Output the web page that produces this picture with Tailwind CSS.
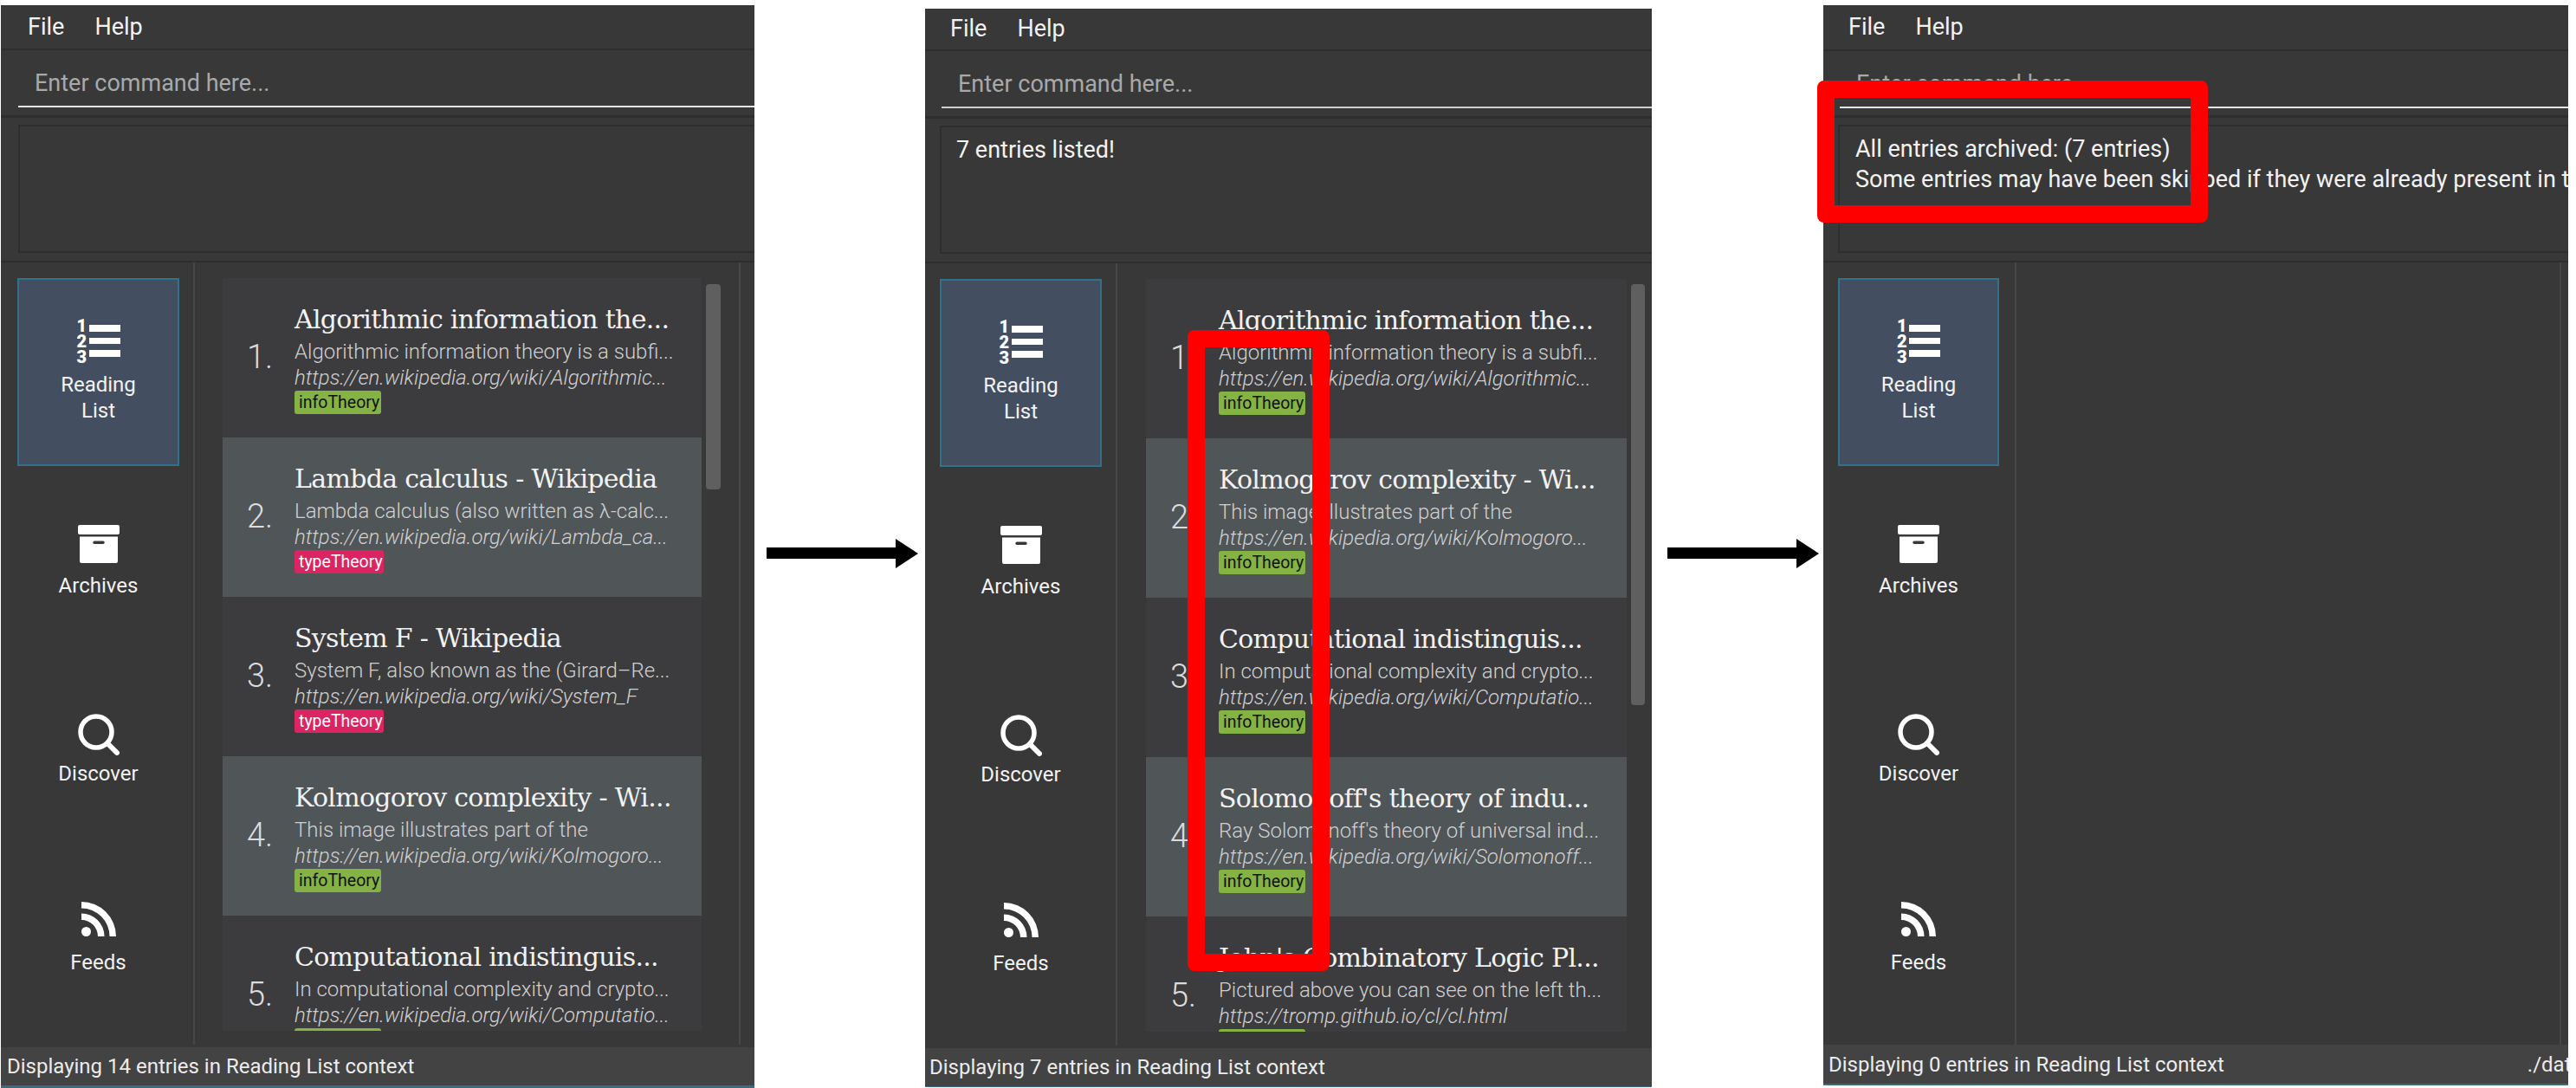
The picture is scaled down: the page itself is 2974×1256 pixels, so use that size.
<!DOCTYPE html>
<html>
<head>
<meta charset="utf-8">
<title>Reading list</title>
<script src="https://cdn.jsdelivr.net/npm/@tailwindcss/browser@4"></script>
</head>
<body class="bg-white">
<div class="relative flex items-start w-[2974px] h-[1256px] overflow-hidden bg-white font-['Roboto',sans-serif] text-[#f2f2f2]">

  <!-- Panel 1 -->
  <div class="ml-[1px] mt-[6px] w-[870px] h-[1250px] shrink-0 flex flex-col bg-[#383838] overflow-hidden">
    <div class="h-[50px] shrink-0 flex items-center gap-[35px] pl-[31px] text-[27px] border-b-2 border-[#2e2e2e] box-content"><span>File</span><span>Help</span></div>
    <div class="h-[75px] shrink-0 pl-[20px] border-b-[3px] border-[#2e2e2e] box-content">
      <div class="h-[66px] pl-[19px] pt-[18px] leading-[40px] text-[27px] text-[#a9a9a9] border-b-2 border-[#e4e4e4]">Enter command here...</div>
    </div>
    <div class="h-[157px] shrink-0 pt-[8px] pl-[20px] border-b-2 border-[#2e2e2e] box-content">
      <div class="h-[148px] border-2 border-r-0 border-[#2e2e2e]"></div>
    </div>
    <div class="h-[903px] shrink-0 flex pt-[18px]">
      <div class="w-[224px] shrink-0 -mt-[18px] pt-[18px] pl-[19px] pr-[16px] border-r-2 border-[#474747]">
        <div class="h-[217px] pb-[2px] flex flex-col items-center justify-center bg-[#434f60] border-2 border-[#33708a]">
          <div class="flex gap-[3px] h-[51px]"><div class="w-[11px] -mt-[1px] text-[20px] leading-[18px] font-black text-white">1<br>2<br>3</div><div class="w-[36px] pt-[7px] flex flex-col gap-[7px]"><div class="h-[7.500px] bg-white"></div><div class="h-[7.500px] bg-white"></div><div class="h-[7.500px] bg-white"></div></div></div>
          <div class="mt-[10px] text-[24px] leading-[30px] text-center">Reading<br>List</div>
        </div>
        <div class="h-[217px] pt-[3px] flex flex-col items-center justify-center">
          <svg class="w-[48px] h-[44px]" viewBox="0 0 48 44" fill="#fff"><rect x="0" y="0" width="48" height="11" rx="2"/><path d="M2 13.500h44v28.500a2 2 0 0 1-2 2h-40a2 2 0 0 1-2-2zM19 18.500a1.500 1.500 0 0 0 0 3.500h10a1.500 1.500 0 0 0 0-3.500z" fill-rule="evenodd"/></svg>
          <div class="mt-[11px] text-[24px] leading-[30px]">Archives</div>
        </div>
        <div class="h-[217px] pt-[4px] flex flex-col items-center justify-center">
          <svg class="w-[48px] h-[48px]" viewBox="0 0 48 48" fill="none" stroke="#fff" stroke-linecap="round"><circle cx="21" cy="21" r="18" stroke-width="5.500"/><path d="M34 34l11 11" stroke-width="6"/></svg>
          <div class="mt-[6px] text-[24px] leading-[30px]">Discover</div>
        </div>
        <div class="h-[217px] pt-[5px] flex flex-col items-center justify-center">
          <svg class="w-[40px] h-[40px]" viewBox="0 0 40 40" fill="#fff"><circle cx="5.500" cy="34.500" r="5.500"/><path d="M0 13.500v7.500a19 19 0 0 1 19 19h7.500A26.500 26.500 0 0 0 0 13.500zM0 0v7.500a32.500 32.500 0 0 1 32.500 32.500H40A40 40 0 0 0 0 0z"/></svg>
          <div class="mt-[15px] text-[24px] leading-[30px]">Feeds</div>
        </div>
      </div>
      <div class="ml-[32px] w-[553px] h-[869px] shrink-0 overflow-hidden">
        <div class="flex h-[184px] bg-[#3c3c3e]"><div class="w-[83px] shrink-0 pl-[28px] pt-[68px] text-[38px] leading-[46px] font-light text-[#dcdcdc]">1.</div><div class="pt-[30px] min-w-0 whitespace-nowrap"><div class="font-['DejaVu_Serif',serif] text-[30px] leading-[36px] tracking-[-0.7px]">Algorithmic information the...</div><div class="mt-[4px] text-[24px] leading-[30px] font-light text-[#d0d0d0]">Algorithmic information theory is a subfi...</div><div class="text-[24px] leading-[30px] font-light italic text-[#d0d0d0]">https://en.wikipedia.org/wiki/Algorithmic...</div><div class="w-[100px] h-[27px] rounded-[3px] bg-[#85b343] pl-[5px] text-[19.5px] leading-[27px] text-[#111]">infoTheory</div></div></div>
        <div class="flex h-[184px] bg-[#505558]"><div class="w-[83px] shrink-0 pl-[28px] pt-[68px] text-[38px] leading-[46px] font-light text-[#dcdcdc]">2.</div><div class="pt-[30px] min-w-0 whitespace-nowrap"><div class="font-['DejaVu_Serif',serif] text-[30px] leading-[36px] tracking-[-0.7px]">Lambda calculus - Wikipedia</div><div class="mt-[4px] text-[24px] leading-[30px] font-light text-[#d0d0d0]">Lambda calculus (also written as λ-calc...</div><div class="text-[24px] leading-[30px] font-light italic text-[#d0d0d0]">https://en.wikipedia.org/wiki/Lambda_ca...</div><div class="w-[103px] h-[27px] rounded-[3px] bg-[#dc2462] pl-[5px] text-[19.5px] leading-[27px] text-white">typeTheory</div></div></div>
        <div class="flex h-[184px] bg-[#3c3c3e]"><div class="w-[83px] shrink-0 pl-[28px] pt-[68px] text-[38px] leading-[46px] font-light text-[#dcdcdc]">3.</div><div class="pt-[30px] min-w-0 whitespace-nowrap"><div class="font-['DejaVu_Serif',serif] text-[30px] leading-[36px] tracking-[-0.7px]">System F - Wikipedia</div><div class="mt-[4px] text-[24px] leading-[30px] font-light text-[#d0d0d0]">System F, also known as the (Girard–Re...</div><div class="text-[24px] leading-[30px] font-light italic text-[#d0d0d0]">https://en.wikipedia.org/wiki/System_F</div><div class="w-[103px] h-[27px] rounded-[3px] bg-[#dc2462] pl-[5px] text-[19.5px] leading-[27px] text-white">typeTheory</div></div></div>
        <div class="flex h-[184px] bg-[#505558]"><div class="w-[83px] shrink-0 pl-[28px] pt-[68px] text-[38px] leading-[46px] font-light text-[#dcdcdc]">4.</div><div class="pt-[30px] min-w-0 whitespace-nowrap"><div class="font-['DejaVu_Serif',serif] text-[30px] leading-[36px] tracking-[-0.7px]">Kolmogorov complexity - Wi...</div><div class="mt-[4px] text-[24px] leading-[30px] font-light text-[#d0d0d0]">This image illustrates part of the</div><div class="text-[24px] leading-[30px] font-light italic text-[#d0d0d0]">https://en.wikipedia.org/wiki/Kolmogoro...</div><div class="w-[100px] h-[27px] rounded-[3px] bg-[#85b343] pl-[5px] text-[19.5px] leading-[27px] text-[#111]">infoTheory</div></div></div>
        <div class="flex h-[184px] bg-[#3c3c3e]"><div class="w-[83px] shrink-0 pl-[28px] pt-[68px] text-[38px] leading-[46px] font-light text-[#dcdcdc]">5.</div><div class="pt-[30px] min-w-0 whitespace-nowrap"><div class="font-['DejaVu_Serif',serif] text-[30px] leading-[36px] tracking-[-0.7px]">Computational indistinguis...</div><div class="mt-[4px] text-[24px] leading-[30px] font-light text-[#d0d0d0]">In computational complexity and crypto...</div><div class="text-[24px] leading-[30px] font-light italic text-[#d0d0d0]">https://en.wikipedia.org/wiki/Computatio...</div><div class="w-[100px] h-[27px] rounded-[3px] bg-[#85b343] pl-[5px] text-[19.5px] leading-[27px] text-[#111]">infoTheory</div></div></div>
      </div>
      <div class="ml-[5px] mt-[7px] w-[17px] h-[237px] shrink-0 rounded-[4px] bg-[#5f5f5f]"></div>
      <div class="ml-[21px] -mt-[18px] w-[2px] h-[903px] shrink-0 bg-[#474747]"></div>
    </div>
    <div class="mt-[3px] h-[44px] shrink-0 flex items-center pl-[7px] text-[24px] bg-[#434343] text-[#ececec] border-b-[3px] border-[#3a6b80] box-content">Displaying 14 entries in Reading List context</div>
  </div>

  <!-- Arrow 1 -->
  <svg class="ml-[14px] mt-[622px] w-[175px] h-[34px] shrink-0" viewBox="0 0 175 34"><path d="M0 10h149V0l26 17-26 17V23H0z" fill="#000"/></svg>

  <!-- Panel 2 -->
  <div class="ml-[8px] mt-[10px] w-[839px] h-[1245px] shrink-0 flex flex-col bg-[#383838] overflow-hidden">
    <div class="h-[47px] shrink-0 flex items-center gap-[35px] pl-[29px] text-[27px] border-b-2 border-[#2e2e2e] box-content"><span>File</span><span>Help</span></div>
    <div class="h-[75px] shrink-0 pl-[19px] border-b-[3px] border-[#2e2e2e] box-content">
      <div class="h-[66px] pl-[19px] pt-[18px] leading-[40px] text-[27px] text-[#a9a9a9] border-b-2 border-[#d0d0d0]">Enter command here...</div>
    </div>
    <div class="h-[157px] shrink-0 pt-[8px] pl-[17px] border-b-2 border-[#2e2e2e] box-content">
      <div class="h-[148px] pl-[17px] pt-[9px] text-[27px] leading-[35px] border-2 border-r-0 border-[#2e2e2e]">7 entries listed!</div>
    </div>
    <div class="h-[903px] shrink-0 flex pt-[18px]">
      <div class="w-[222px] shrink-0 -mt-[18px] pt-[18px] pl-[17px] pr-[16px] border-r-2 border-[#474747]">
        <div class="h-[217px] pb-[2px] flex flex-col items-center justify-center bg-[#434f60] border-2 border-[#33708a]">
          <div class="flex gap-[3px] h-[51px]"><div class="w-[11px] -mt-[1px] text-[20px] leading-[18px] font-black text-white">1<br>2<br>3</div><div class="w-[36px] pt-[7px] flex flex-col gap-[7px]"><div class="h-[7.500px] bg-white"></div><div class="h-[7.500px] bg-white"></div><div class="h-[7.500px] bg-white"></div></div></div>
          <div class="mt-[10px] text-[24px] leading-[30px] text-center">Reading<br>List</div>
        </div>
        <div class="h-[217px] pt-[3px] flex flex-col items-center justify-center">
          <svg class="w-[48px] h-[44px]" viewBox="0 0 48 44" fill="#fff"><rect x="0" y="0" width="48" height="11" rx="2"/><path d="M2 13.500h44v28.500a2 2 0 0 1-2 2h-40a2 2 0 0 1-2-2zM19 18.500a1.500 1.500 0 0 0 0 3.500h10a1.500 1.500 0 0 0 0-3.500z" fill-rule="evenodd"/></svg>
          <div class="mt-[11px] text-[24px] leading-[30px]">Archives</div>
        </div>
        <div class="h-[217px] pt-[4px] flex flex-col items-center justify-center">
          <svg class="w-[48px] h-[48px]" viewBox="0 0 48 48" fill="none" stroke="#fff" stroke-linecap="round"><circle cx="21" cy="21" r="18" stroke-width="5.500"/><path d="M34 34l11 11" stroke-width="6"/></svg>
          <div class="mt-[6px] text-[24px] leading-[30px]">Discover</div>
        </div>
        <div class="h-[217px] pt-[5px] flex flex-col items-center justify-center">
          <svg class="w-[40px] h-[40px]" viewBox="0 0 40 40" fill="#fff"><circle cx="5.500" cy="34.500" r="5.500"/><path d="M0 13.500v7.500a19 19 0 0 1 19 19h7.500A26.500 26.500 0 0 0 0 13.500zM0 0v7.500a32.500 32.500 0 0 1 32.500 32.500H40A40 40 0 0 0 0 0z"/></svg>
          <div class="mt-[15px] text-[24px] leading-[30px]">Feeds</div>
        </div>
      </div>
      <div class="ml-[33px] w-[555px] h-[869px] shrink-0 overflow-hidden">
        <div class="flex h-[184px] bg-[#3c3c3e]"><div class="w-[84px] shrink-0 pl-[28px] pt-[68px] text-[38px] leading-[46px] font-light text-[#dcdcdc]">1.</div><div class="pt-[30px] min-w-0 whitespace-nowrap"><div class="font-['DejaVu_Serif',serif] text-[30px] leading-[36px] tracking-[-0.7px]">Algorithmic information the...</div><div class="mt-[4px] text-[24px] leading-[30px] font-light text-[#d0d0d0]">Algorithmic information theory is a subfi...</div><div class="text-[24px] leading-[30px] font-light italic text-[#d0d0d0]">https://en.wikipedia.org/wiki/Algorithmic...</div><div class="w-[100px] h-[27px] rounded-[3px] bg-[#85b343] pl-[5px] text-[19.5px] leading-[27px] text-[#111]">infoTheory</div></div></div>
        <div class="flex h-[184px] bg-[#505558]"><div class="w-[84px] shrink-0 pl-[28px] pt-[68px] text-[38px] leading-[46px] font-light text-[#dcdcdc]">2.</div><div class="pt-[30px] min-w-0 whitespace-nowrap"><div class="font-['DejaVu_Serif',serif] text-[30px] leading-[36px] tracking-[-0.7px]">Kolmogorov complexity - Wi...</div><div class="mt-[4px] text-[24px] leading-[30px] font-light text-[#d0d0d0]">This image illustrates part of the</div><div class="text-[24px] leading-[30px] font-light italic text-[#d0d0d0]">https://en.wikipedia.org/wiki/Kolmogoro...</div><div class="w-[100px] h-[27px] rounded-[3px] bg-[#85b343] pl-[5px] text-[19.5px] leading-[27px] text-[#111]">infoTheory</div></div></div>
        <div class="flex h-[184px] bg-[#3c3c3e]"><div class="w-[84px] shrink-0 pl-[28px] pt-[68px] text-[38px] leading-[46px] font-light text-[#dcdcdc]">3.</div><div class="pt-[30px] min-w-0 whitespace-nowrap"><div class="font-['DejaVu_Serif',serif] text-[30px] leading-[36px] tracking-[-0.7px]">Computational indistinguis...</div><div class="mt-[4px] text-[24px] leading-[30px] font-light text-[#d0d0d0]">In computational complexity and crypto...</div><div class="text-[24px] leading-[30px] font-light italic text-[#d0d0d0]">https://en.wikipedia.org/wiki/Computatio...</div><div class="w-[100px] h-[27px] rounded-[3px] bg-[#85b343] pl-[5px] text-[19.5px] leading-[27px] text-[#111]">infoTheory</div></div></div>
        <div class="flex h-[184px] bg-[#505558]"><div class="w-[84px] shrink-0 pl-[28px] pt-[68px] text-[38px] leading-[46px] font-light text-[#dcdcdc]">4.</div><div class="pt-[30px] min-w-0 whitespace-nowrap"><div class="font-['DejaVu_Serif',serif] text-[30px] leading-[36px] tracking-[-0.7px]">Solomonoff's theory of indu...</div><div class="mt-[4px] text-[24px] leading-[30px] font-light text-[#d0d0d0]">Ray Solomonoff's theory of universal ind...</div><div class="text-[24px] leading-[30px] font-light italic text-[#d0d0d0]">https://en.wikipedia.org/wiki/Solomonoff...</div><div class="w-[100px] h-[27px] rounded-[3px] bg-[#85b343] pl-[5px] text-[19.5px] leading-[27px] text-[#111]">infoTheory</div></div></div>
        <div class="flex h-[184px] bg-[#3c3c3e]"><div class="w-[84px] shrink-0 pl-[28px] pt-[68px] text-[38px] leading-[46px] font-light text-[#dcdcdc]">5.</div><div class="pt-[30px] min-w-0 whitespace-nowrap"><div class="font-['DejaVu_Serif',serif] text-[30px] leading-[36px] tracking-[-0.7px]">John's Combinatory Logic Pl...</div><div class="mt-[4px] text-[24px] leading-[30px] font-light text-[#d0d0d0]">Pictured above you can see on the left th...</div><div class="text-[24px] leading-[30px] font-light italic text-[#d0d0d0]">https://tromp.github.io/cl/cl.html</div><div class="w-[100px] h-[27px] rounded-[3px] bg-[#85b343] pl-[5px] text-[19.5px] leading-[27px] text-[#111]">infoTheory</div></div></div>
      </div>
      <div class="ml-[5px] mt-[6px] w-[16px] h-[486px] shrink-0 rounded-[4px] bg-[#5f5f5f]"></div>
    </div>
    <div class="mt-[3px] h-[44px] shrink-0 flex items-center pl-[5px] text-[24px] bg-[#434343] text-[#ececec] border-b-2 border-[#3a6b80] box-content">Displaying 7 entries in Reading List context</div>
  </div>

  <!-- Arrow 2 -->
  <svg class="ml-[18px] mt-[622px] w-[175px] h-[34px] shrink-0" viewBox="0 0 175 34"><path d="M0 10h149V0l26 17-26 17V23H0z" fill="#000"/></svg>

  <!-- Panel 3 -->
  <div class="ml-[5px] mt-[6px] w-[860px] h-[1247px] shrink-0 flex flex-col bg-[#383838] overflow-hidden">
    <div class="h-[51px] shrink-0 flex items-center gap-[35px] pl-[29px] text-[27px] border-b-2 border-[#2e2e2e] box-content"><span>File</span><span>Help</span></div>
    <div class="h-[74px] shrink-0 pl-[19px] border-b-[3px] border-[#2e2e2e] box-content">
      <div class="h-[66px] pl-[19px] pt-[18px] leading-[40px] text-[27px] text-[#a9a9a9] border-b-2 border-[#e4e4e4]">Enter command here...</div>
    </div>
    <div class="h-[157px] shrink-0 pt-[8px] pl-[17px] border-b-2 border-[#2e2e2e] box-content">
      <div class="h-[148px] pl-[18px] pt-[9px] text-[27px] leading-[35px] whitespace-nowrap border-2 border-r-0 border-[#2e2e2e]">All entries archived: (7 entries)<br>Some entries may have been skipped if they were already present in the archives.</div>
    </div>
    <div class="h-[903px] shrink-0 flex pt-[18px]">
      <div class="w-[223px] shrink-0 -mt-[18px] pt-[18px] pl-[17px] pr-[18px] border-r-2 border-[#474747]">
        <div class="h-[217px] pb-[2px] flex flex-col items-center justify-center bg-[#434f60] border-2 border-[#33708a]">
          <div class="flex gap-[3px] h-[51px]"><div class="w-[11px] -mt-[1px] text-[20px] leading-[18px] font-black text-white">1<br>2<br>3</div><div class="w-[36px] pt-[7px] flex flex-col gap-[7px]"><div class="h-[7.500px] bg-white"></div><div class="h-[7.500px] bg-white"></div><div class="h-[7.500px] bg-white"></div></div></div>
          <div class="mt-[10px] text-[24px] leading-[30px] text-center">Reading<br>List</div>
        </div>
        <div class="h-[217px] pt-[3px] flex flex-col items-center justify-center">
          <svg class="w-[48px] h-[44px]" viewBox="0 0 48 44" fill="#fff"><rect x="0" y="0" width="48" height="11" rx="2"/><path d="M2 13.500h44v28.500a2 2 0 0 1-2 2h-40a2 2 0 0 1-2-2zM19 18.500a1.500 1.500 0 0 0 0 3.500h10a1.500 1.500 0 0 0 0-3.500z" fill-rule="evenodd"/></svg>
          <div class="mt-[11px] text-[24px] leading-[30px]">Archives</div>
        </div>
        <div class="h-[217px] pt-[4px] flex flex-col items-center justify-center">
          <svg class="w-[48px] h-[48px]" viewBox="0 0 48 48" fill="none" stroke="#fff" stroke-linecap="round"><circle cx="21" cy="21" r="18" stroke-width="5.500"/><path d="M34 34l11 11" stroke-width="6"/></svg>
          <div class="mt-[6px] text-[24px] leading-[30px]">Discover</div>
        </div>
        <div class="h-[217px] pt-[5px] flex flex-col items-center justify-center">
          <svg class="w-[40px] h-[40px]" viewBox="0 0 40 40" fill="#fff"><circle cx="5.500" cy="34.500" r="5.500"/><path d="M0 13.500v7.500a19 19 0 0 1 19 19h7.500A26.500 26.500 0 0 0 0 13.500zM0 0v7.500a32.500 32.500 0 0 1 32.500 32.500H40A40 40 0 0 0 0 0z"/></svg>
          <div class="mt-[15px] text-[24px] leading-[30px]">Feeds</div>
        </div>
      </div>
      <div class="ml-[627px] -mt-[18px] w-[2px] h-[903px] shrink-0 bg-[#474747]"></div>
    </div>
    <div class="h-[45px] shrink-0 flex items-center pl-[6px] text-[24px] whitespace-nowrap bg-[#434343] text-[#ececec] border-b-2 border-[#3a6b80] box-content"><span>Displaying 0 entries in Reading List context</span><span class="ml-[350px]">./data/readinglist.json</span></div>
  </div>

  <!-- Red highlight boxes over the screenshots -->
  <div class="absolute left-[1371px] top-[381px] w-[164px] h-[740px] border-[20px] border-[#ff0000] rounded-[8px]"></div>
  <div class="absolute left-[2098px] top-[93px] w-[451px] h-[164px] border-[20px] border-[#ff0000] rounded-[8px]"></div>
</div>
</body>
</html>
